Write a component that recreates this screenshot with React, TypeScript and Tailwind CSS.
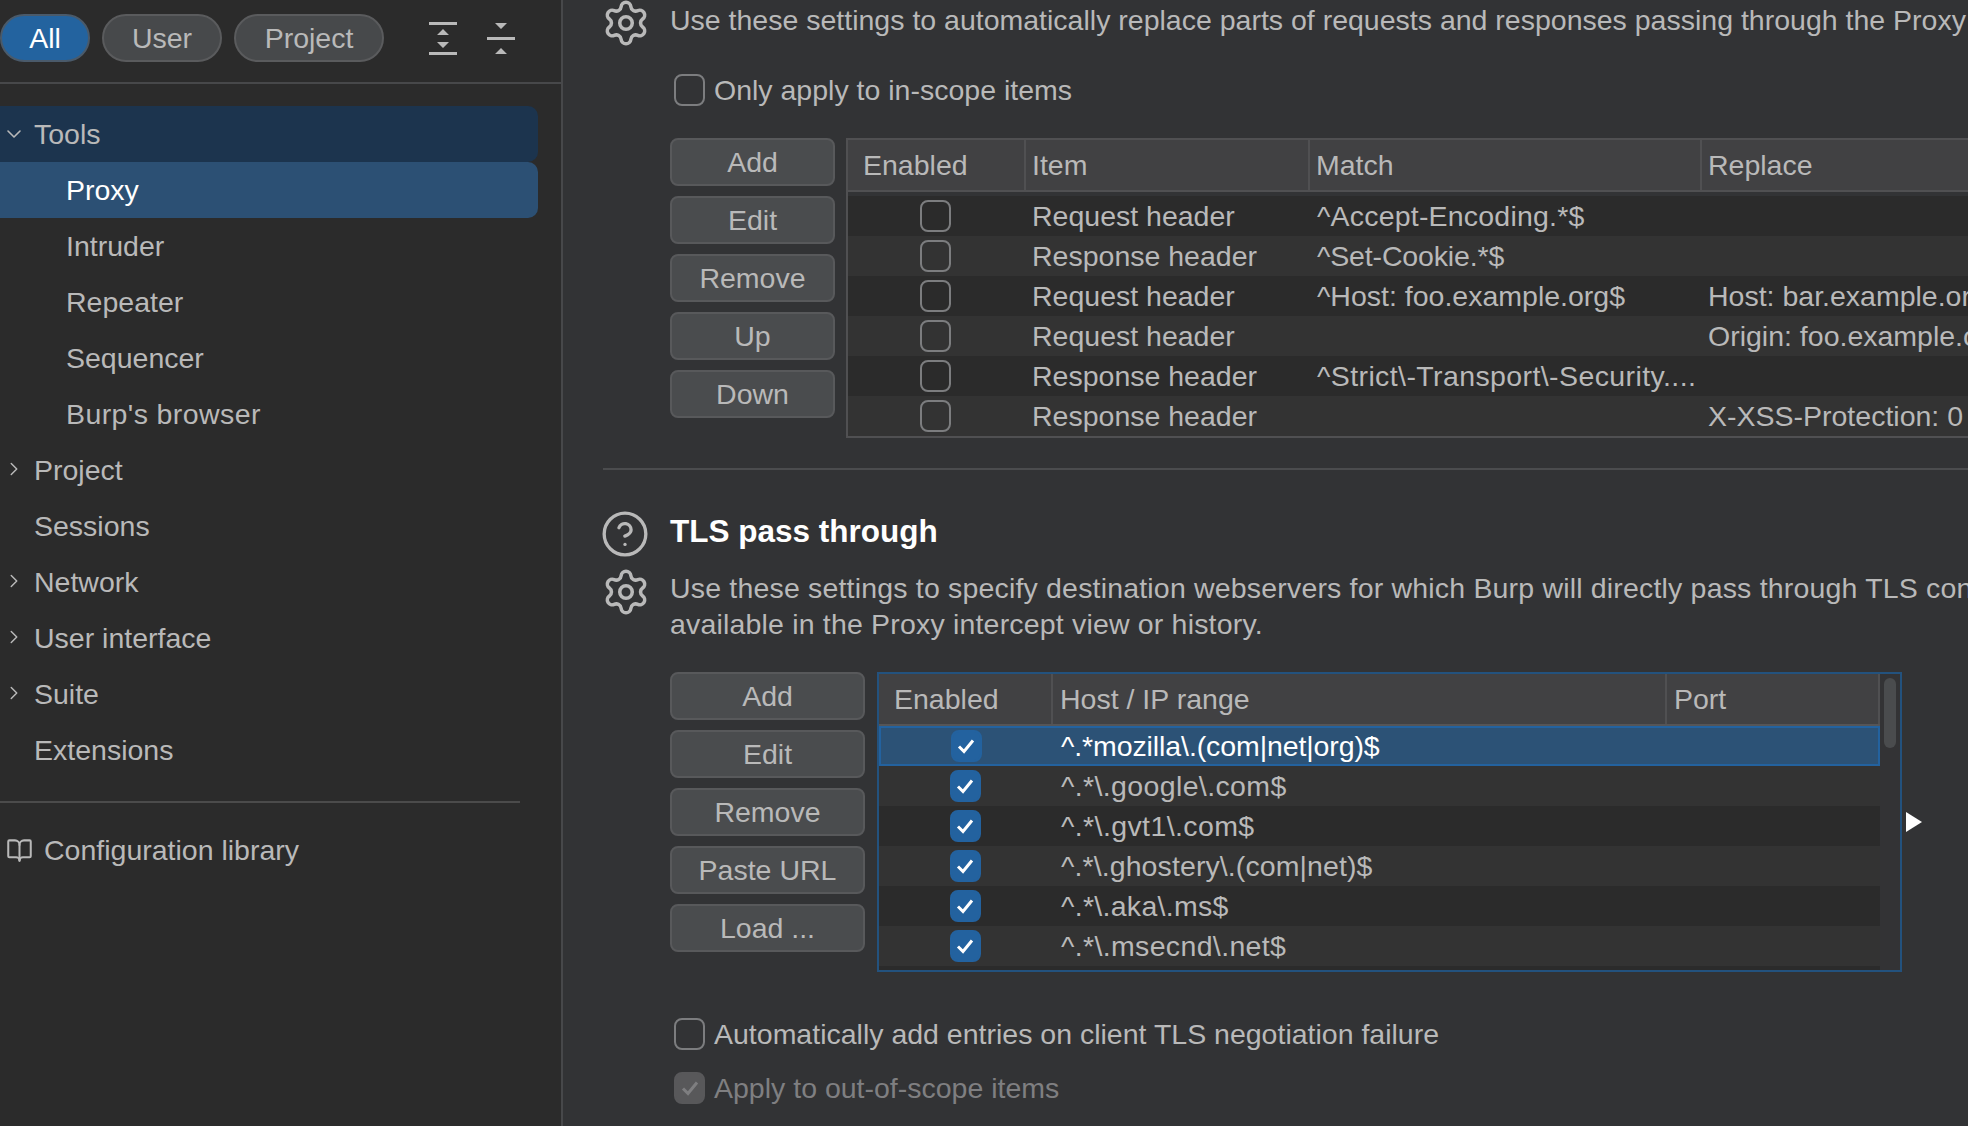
import React from "react";
import { Settings, CircleHelp, BookOpen, ChevronRight, ChevronDown } from "lucide-react";

const Box = ({ state = "off" }: { state?: "off" | "on" | "disabled" }) => {
  const cls =
    state === "on"
      ? "bg-[#23629f] border-[#23629f]"
      : state === "disabled"
      ? "bg-[#58585a] border-[#58585a]"
      : "border-[#7c7d7f]";
  return (
    <span className={`flex h-[32px] w-[31px] shrink-0 items-center justify-center rounded-[8px] border-2 ${cls}`}>
      {state !== "off" && (
        <svg width="20" height="20" viewBox="0 0 20 20" fill="none" stroke={state === "on" ? "#ffffff" : "#7e7e80"} strokeWidth="3">
          <path d="M3 10.5 L8 15.5 L17 4.5" />
        </svg>
      )}
    </span>
  );
};

const Btn = ({ children }: { children: React.ReactNode }) => (
  <div className="flex h-[48px] items-center justify-center rounded-[8px] border-2 border-[#58595b] bg-[#4a4c4e]">{children}</div>
);

const Pill = ({ children, active, w }: { children: React.ReactNode; active?: boolean; w: string }) => (
  <div
    className={`flex h-[48px] items-center justify-center rounded-full border-2 ${w} ${
      active ? "border-[#4a5a6a] bg-[#23639f] text-white" : "border-[#5a5b5d] bg-[#47494b] text-[#b9b9b9]"
    }`}
  >
    {children}
  </div>
);

const Nav = ({
  label,
  indent,
  chevron,
  cls = "",
}: {
  label: string;
  indent?: boolean;
  chevron?: "down" | "right";
  cls?: string;
}) => (
  <div className={`flex h-[56px] w-[538px] items-center rounded-r-[10px] ${indent ? "pl-[66px]" : "pl-[34px]"} relative ${cls}`}>
    {chevron === "right" && <ChevronRight size={22} strokeWidth={1.6} className="absolute left-[3px] top-[16px]" />}
    {chevron === "down" && <ChevronDown size={24} strokeWidth={1.6} className="absolute left-[2px] top-[16px]" />}
    {label}
  </div>
);

const rows1 = [
  ["Request header", "^Accept-Encoding.*$", "", "tracking-[0.2px]"],
  ["Response header", "^Set-Cookie.*$", "", "tracking-[-0.15px]"],
  ["Request header", "^Host: foo.example.org$", "Host: bar.example.org", ""],
  ["Request header", "", "Origin: foo.example.org", ""],
  ["Response header", "^Strict\\-Transport\\-Security....", "", "tracking-[0.4px]"],
  ["Response header", "", "X-XSS-Protection: 0", ""],
];

const rows2 = [
  ["^.*mozilla\\.(com|net|org)$", "tracking-[-0.1px]"],
  ["^.*\\.google\\.com$", "tracking-[0.37px]"],
  ["^.*\\.gvt1\\.com$", "tracking-[0.4px]"],
  ["^.*\\.ghostery\\.(com|net)$", "tracking-[0.1px]"],
  ["^.*\\.aka\\.ms$", "tracking-[0.3px]"],
  ["^.*\\.msecnd\\.net$", "tracking-[0.35px]"],
];

export default function App() {
  return (
    <div
      className="flex h-[1126px] w-[1968px] overflow-hidden bg-[#323335] text-[28.5px] text-[#b9b9b9]"
      style={{ fontFamily: '"Liberation Sans", Arial, sans-serif' }}
    >
      <aside className="flex h-full w-[563px] shrink-0 flex-col border-r-2 border-[#47484a] bg-[#2b2b2b]">
        <div className="flex h-[84px] shrink-0 items-start border-b-2 border-[#47484a] pt-[14px]">
          <Pill active w="w-[90px] ml-0">All</Pill>
          <Pill w="w-[120px] ml-[12px]">User</Pill>
          <Pill w="w-[150px] ml-[12px]">Project</Pill>
          <svg width="28" height="34" viewBox="0 0 28 34" fill="#b9b9b9" className="ml-[45px] mt-[8px]">
            <rect x="0" y="0" width="28" height="3" />
            <rect x="0" y="30" width="28" height="3" />
            <path d="M14 7 L20 13 H8 Z M14 26 L8 20 H20 Z" />
          </svg>
          <svg width="28" height="34" viewBox="0 0 28 34" fill="#b9b9b9" className="ml-[30px] mt-[8px]">
            <rect x="0" y="15" width="28" height="3" />
            <path d="M14 7 L8 1 H20 Z M14 26 L20 32 H8 Z" />
          </svg>
        </div>
        <nav className="mt-[22px] flex flex-col">
          <Nav label="Tools" chevron="down" cls="bg-[#1c344e]" />
          <Nav label="Proxy" indent cls="bg-[#2c5074] text-white" />
          <Nav label="Intruder" indent />
          <Nav label="Repeater" indent />
          <Nav label="Sequencer" indent />
          <Nav label="Burp's browser" indent cls="tracking-[0.4px]" />
          <Nav label="Project" chevron="right" />
          <Nav label="Sessions" />
          <Nav label="Network" chevron="right" />
          <Nav label="User interface" chevron="right" />
          <Nav label="Suite" chevron="right" />
          <Nav label="Extensions" />
        </nav>
        <div className="mt-[23px] h-[2px] w-[520px] bg-[#4b4b4b]" />
        <div className="mt-[19px] flex h-[56px] items-center pl-[6px]">
          <BookOpen size={27} strokeWidth={1.8} className="mr-[11px]" />
          Configuration library
        </div>
      </aside>

      <main className="min-w-0 flex-1 overflow-hidden pl-[40px]">
        <div className="flex h-[40px] items-center whitespace-nowrap">
          <Settings size={50} strokeWidth={1.7} className="relative top-[3px] ml-[-2px] mr-[19px] shrink-0" />
          Use these settings to automatically replace parts of requests and responses passing through the Proxy listener.
        </div>
        <label className="ml-[71px] mt-[34px] flex h-[32px] items-center gap-[9px]">
          <Box />
          Only apply to in-scope items
        </label>

        <div className="ml-[67px] mt-[32px] flex w-[1400px] items-start">
          <div className="flex w-[165px] shrink-0 flex-col gap-[10px]">
            {["Add", "Edit", "Remove", "Up", "Down"].map((b) => (
              <Btn key={b}>{b}</Btn>
            ))}
          </div>
          <div className="ml-[11px] flex-1 border-2 border-r-0 border-[#505052]">
            <div className="flex h-[52px] items-center border-b-2 border-[#505052] bg-[#414143]">
              <div className="flex h-full w-[178px] items-center border-r-2 border-[#505052] pl-[15px]">Enabled</div>
              <div className="flex h-full w-[284px] items-center border-r-2 border-[#505052] pl-[6px]">Item</div>
              <div className="flex h-full w-[392px] items-center border-r-2 border-[#505052] pl-[6px]">Match</div>
              <div className="pl-[6px]">Replace</div>
            </div>
            <div className="mt-[4px]">
              {rows1.map((r, i) => (
                <div key={i} className={`flex h-[40px] items-center whitespace-nowrap ${i % 2 === 0 ? "bg-[#2b2b2b]" : "bg-[#333333]"}`}>
                  <div className="flex w-[178px] justify-center pr-[3px]">
                    <Box />
                  </div>
                  <div className="w-[284px] pl-[6px]">{r[0]}</div>
                  <div className={`w-[392px] pl-[7px] ${r[3]}`}>{r[1]}</div>
                  <div className="pl-[6px]">{r[2]}</div>
                </div>
              ))}
            </div>
          </div>
        </div>

        <div className="mt-[30px] h-[2px] bg-[#4b4c4e]" />

        <div className="mt-[40px] flex h-[44px] items-center">
          <CircleHelp size={50} strokeWidth={1.6} className="relative top-[2px] ml-[-3px] mr-[20px] shrink-0" />
          <span className="text-[31.5px] font-bold text-white">TLS pass through</span>
        </div>
        <div className="mt-[16px] flex items-start">
          <Settings size={50} strokeWidth={1.7} className="ml-[-2px] mr-[19px] mt-[-3px] shrink-0" />
          <div className="whitespace-nowrap leading-[36px] tracking-[0.18px]">
            Use these settings to specify destination webservers for which Burp will directly pass through TLS connections. No details will be
            <br />
            available in the Proxy intercept view or history.
          </div>
        </div>

        <div className="ml-[67px] mt-[30px] flex items-start">
          <div className="flex w-[195px] shrink-0 flex-col gap-[10px]">
            {["Add", "Edit", "Remove", "Paste URL", "Load ..."].map((b) => (
              <Btn key={b}>{b}</Btn>
            ))}
          </div>
          <div className="ml-[12px] flex h-[300px] w-[1025px] shrink-0 border-2 border-[#23527e]">
            <div className="flex w-[1001px] shrink-0 flex-col">
              <div className="flex h-[52px] shrink-0 items-center border-b-2 border-[#555557] bg-[#414143]">
                <div className="flex h-full w-[174px] items-center border-r-2 border-[#505052] pl-[15px]">Enabled</div>
                <div className="flex h-full w-[614px] items-center border-r-2 border-[#505052] pl-[7px]">Host / IP range</div>
                <div className="flex h-full flex-1 items-center border-r-2 border-[#505052] pl-[7px]">Port</div>
              </div>
              <div className="overflow-hidden">
                {rows2.map(([r, t], i) => (
                  <div
                    key={r}
                    className={`flex h-[40px] items-center whitespace-nowrap ${
                      i === 0
                        ? "border-2 border-[#23629f] bg-[#2c5276] text-white"
                        : i % 2 === 0
                        ? "bg-[#2b2b2b]"
                        : "bg-[#333333]"
                    }`}
                  >
                    <div className={`flex justify-center ${i === 0 ? "w-[170px]" : "w-[174px] pr-[2px]"}`}>
                      <Box state="on" />
                    </div>
                    <div className={`${i === 0 ? "pl-[10px]" : "pl-[8px]"} ${t}`}>{r}</div>
                  </div>
                ))}
                <div className="h-[10px] bg-[#2b2b2b]" />
              </div>
            </div>
            <div className="flex-1 bg-[#333335] pl-[4px] pt-[4px]">
              <div className="h-[70px] w-[12px] rounded-[6px] bg-[#4a4c4e]" />
            </div>
          </div>
          <svg width="16" height="20" viewBox="0 0 16 20" className="ml-[4px] mt-[140px]" fill="#ffffff">
            <path d="M0 0 L16 10 L0 20 Z" />
          </svg>
        </div>

        <label className="ml-[71px] mt-[46px] flex h-[32px] items-center gap-[9px]">
          <Box />
          Automatically add entries on client TLS negotiation failure
        </label>
        <label className="ml-[71px] mt-[22px] flex h-[32px] items-center gap-[9px] text-[#7f7f81]">
          <Box state="disabled" />
          Apply to out-of-scope items
        </label>
      </main>
    </div>
  );
}
